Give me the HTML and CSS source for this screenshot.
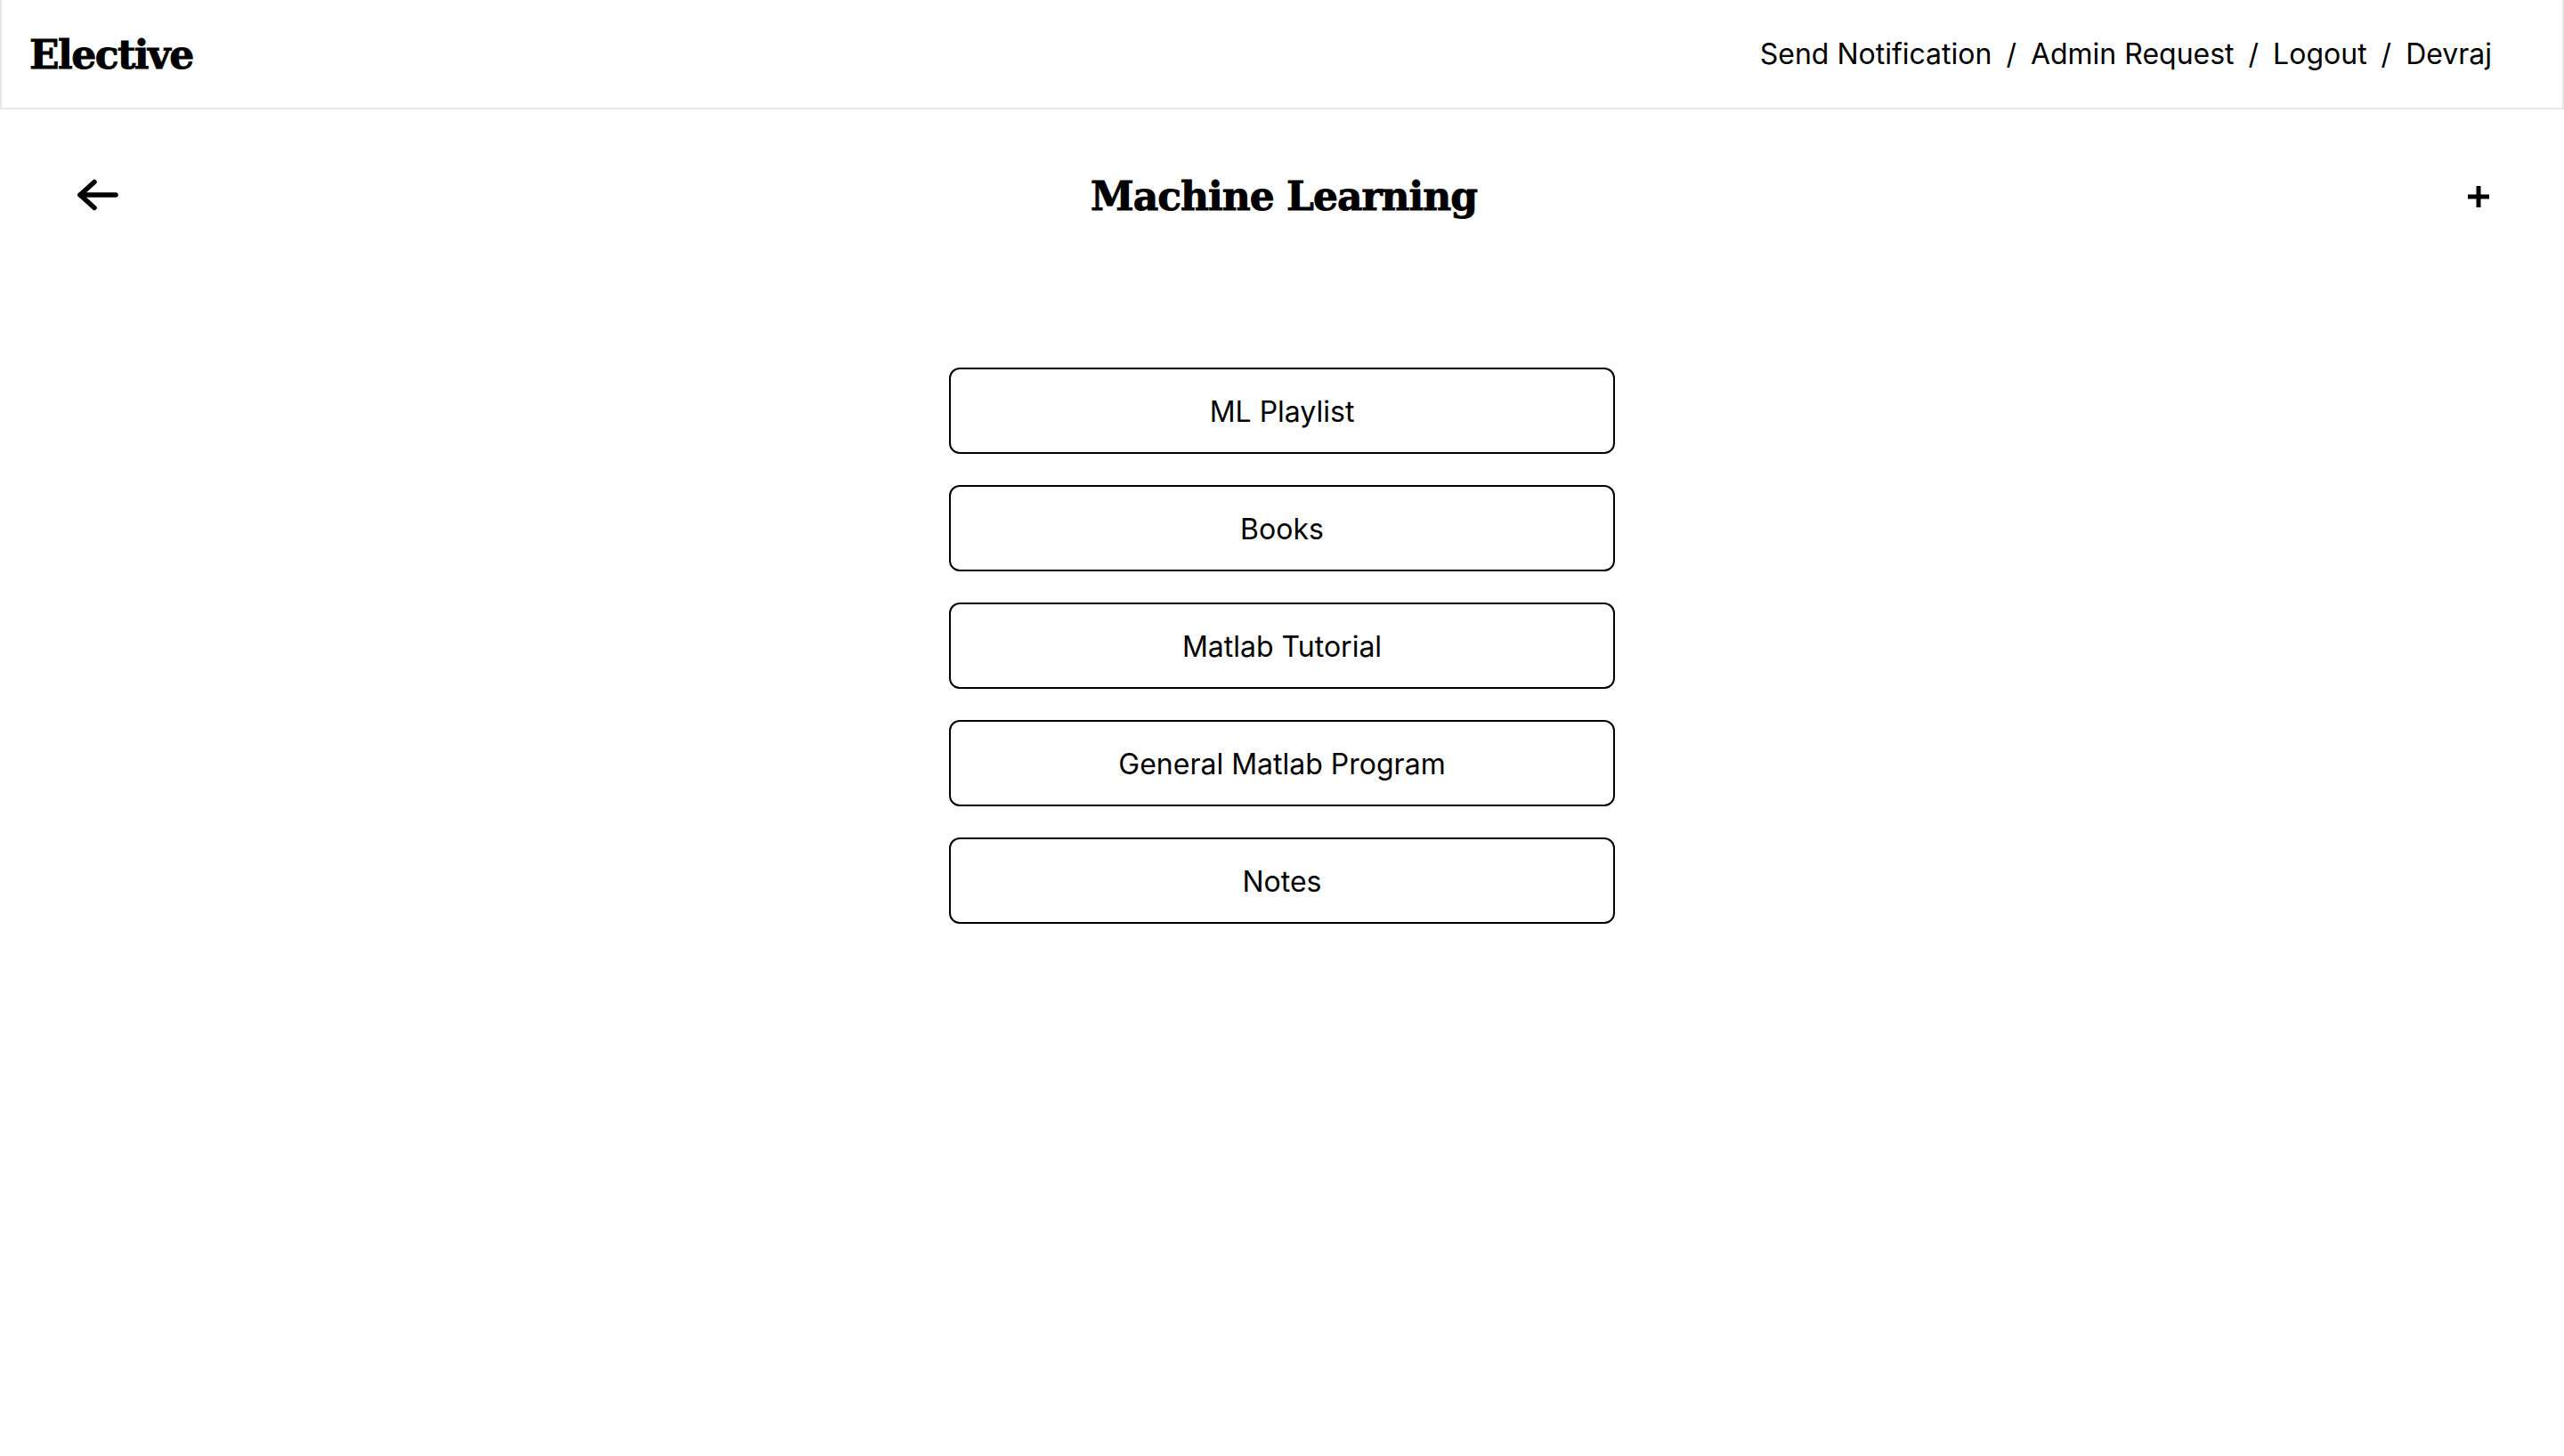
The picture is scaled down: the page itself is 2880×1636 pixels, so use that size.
FILE: index.html
```html
<!DOCTYPE html>
<html lang="en">
<head>
<meta charset="utf-8">
<title>Elective</title>
<link rel="stylesheet" href="styles.css">
</head>
<body>
<header class="topbar">
  <div class="logo">Elective</div>
  <nav class="nav">
    <a class="nav-link" href="#">Send Notification</a>
    <span class="sep">/</span>
    <a class="nav-link" href="#">Admin Request</a>
    <span class="sep">/</span>
    <a class="nav-link" href="#">Logout</a>
    <span class="sep">/</span>
    <a class="nav-link" href="#">Devraj</a>
  </nav>
</header>
<main class="page">
  <div class="title-row">
    <button class="icon-btn back" aria-label="Back">
      <svg width="46" height="36" viewBox="0 0 46 36" fill="none" stroke="#000" stroke-width="5.5" stroke-linecap="round" stroke-linejoin="round">
        <path d="M3 18H43"/>
        <path d="M19 3.5L3 18L19 32.5"/>
      </svg>
    </button>
    <h1 class="title">Machine Learning</h1>
    <button class="icon-btn add" aria-label="Add">
      <svg width="26" height="26" viewBox="0 0 26 26" fill="none" stroke="#000" stroke-width="5">
        <path d="M13 1V25"/>
        <path d="M1 13H25"/>
      </svg>
    </button>
  </div>
  <div class="list">
    <a class="item" href="#">ML Playlist</a>
    <a class="item" href="#">Books</a>
    <a class="item" href="#">Matlab Tutorial</a>
    <a class="item" href="#">General Matlab Program</a>
    <a class="item" href="#">Notes</a>
  </div>
</main>
</body>
</html>
```
FILE: styles.css
```css
* { box-sizing: border-box; }
html, body { margin: 0; padding: 0; background: #fff; }
body {
  font-family: Inter, "Noto Sans", sans-serif;
  color: #000;
}
.topbar {
  display: flex;
  justify-content: space-between;
  align-items: center;
  height: 123px;
  padding: 0 79px 0 31px;
  border: 2px solid #e5e7eb;
  border-top: none;
}
.logo {
  font-family: "DejaVu Serif", "Liberation Serif", serif;
  font-weight: 700;
  font-size: 44px;
  letter-spacing: -1.5px;
  -webkit-text-stroke: 0.9px #000;
  line-height: 1;
  margin-top: 2px;
}
.nav {
  display: flex;
  align-items: center;
  gap: 16px;
  font-size: 32px;
}
.nav-link {
  color: #000;
  text-decoration: none;
}
.sep { color: #000; }
.page {
  padding-top: 60px;
}
.title-row {
  display: grid;
  grid-template-columns: 1fr auto 1fr;
  align-items: center;
  height: 72px;
  padding: 0 83px 0 87px;
}
.icon-btn {
  background: none;
  border: none;
  padding: 0;
  display: flex;
  align-items: center;
  cursor: pointer;
}
.back { justify-self: start; }
.add { justify-self: end; margin-top: 4px; }
.title {
  margin: 0;
  padding-top: 3px;
  font-family: "DejaVu Serif", "Liberation Serif", serif;
  font-weight: 700;
  font-size: 44px;
  letter-spacing: -1px;
  -webkit-text-stroke: 0.9px #000;
  line-height: 1;
}
.list {
  display: flex;
  flex-direction: column;
  align-items: center;
  gap: 35px;
  margin-top: 158px;
}
.item {
  display: flex;
  align-items: center;
  justify-content: center;
  width: 748px;
  height: 97px;
  padding-top: 2px;
  border: 2.5px solid #000;
  border-radius: 12px;
  font-size: 32px;
  color: #000;
  text-decoration: none;
}
```
